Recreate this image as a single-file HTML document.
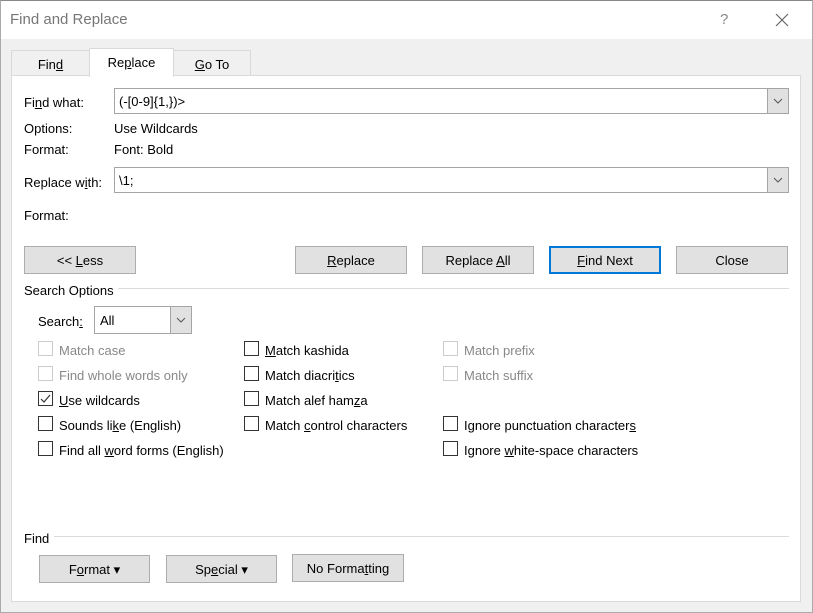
<!DOCTYPE html>
<html><head><style>
*{box-sizing:border-box;margin:0;padding:0}
body{width:813px;height:613px;background:#f0f0f0;font-family:"Liberation Sans",sans-serif;font-size:13px;color:#000;position:relative;overflow:hidden}
.a{position:absolute;white-space:nowrap}
.win{position:absolute;left:0;top:0;width:813px;height:613px;border:1px solid #aaa;border-top:1px solid #888}
.title{position:absolute;left:1px;top:1px;width:811px;height:38px;background:#fff}
.panel{position:absolute;left:11px;top:75px;width:790px;height:527px;background:#fff;border:1px solid #dadada}
.tab{position:absolute;top:50px;height:26px;background:#f0f0f0;border:1px solid #d9d9d9;border-bottom:none;text-align:center;line-height:28px}
.inp{position:absolute;left:114px;width:675px;height:26px;border:1px solid #a5a5a5;background:#fff;padding-left:4px;line-height:25px}
.dd{position:absolute;right:0;top:0;width:21px;height:24px;background:#e1e1e1;border-left:1px solid #a5a5a5}
.btn{position:absolute;height:28px;background:#e1e1e1;border:1px solid #adadad;text-align:center;line-height:27px}
.cb{position:absolute;width:15px;height:15px;border:1px solid #333;background:#fff}
.dis{border-color:#ccc}
.gt{color:#888}
u{text-decoration:underline}
.line{position:absolute;height:1px;background:#dcdcdc}
</style></head><body>
<div class="title"></div>
<div class="win"></div>
<div class="a" style="left:10px;top:11px;font-size:15px;color:#777">Find and Replace</div>
<div class="a" style="left:720px;top:11px;font-size:15px;color:#888">?</div>
<svg class="a" style="left:775px;top:13px" width="14" height="14"><path d="M1 1L13 13M13 1L1 13" stroke="#666" stroke-width="1.2"/></svg>
<div class="tab" style="left:11px;width:79px"><span>Fin<u>d</u></span></div>
<div class="tab" style="left:173px;width:78px"><u>G</u>o To</div>
<div class="panel"></div>
<div class="tab" style="left:89px;top:48px;width:85px;height:29px;background:#fff;z-index:2">Re<u>p</u>lace</div>

<div class="a" style="left:24px;top:95px">Fi<u>n</u>d what:</div>
<div class="inp" style="top:88px">(-[0-9]{1,})&gt;<div class="dd"><svg width="20" height="24"><path d="M6 10l4 4 4-4" stroke="#555" fill="none"/></svg></div></div>
<div class="a" style="left:24px;top:121px">Options:</div>
<div class="a" style="left:114px;top:121px">Use Wildcards</div>
<div class="a" style="left:24px;top:142px">Format:</div>
<div class="a" style="left:114px;top:142px">Font: Bold</div>
<div class="a" style="left:24px;top:175px">Replace w<u>i</u>th:</div>
<div class="inp" style="top:167px">\1;<div class="dd"><svg width="20" height="24"><path d="M6 10l4 4 4-4" stroke="#555" fill="none"/></svg></div></div>
<div class="a" style="left:24px;top:208px">Format:</div>

<div class="btn" style="left:24px;top:246px;width:112px">&lt;&lt; <u>L</u>ess</div>
<div class="btn" style="left:295px;top:246px;width:112px"><u>R</u>eplace</div>
<div class="btn" style="left:422px;top:246px;width:112px">Replace <u>A</u>ll</div>
<div class="btn" style="left:549px;top:246px;width:112px;border:2px solid #0078d7;line-height:25px"><u>F</u>ind Next</div>
<div class="btn" style="left:676px;top:246px;width:112px">Close</div>

<div class="a" style="left:24px;top:283px">Search Options</div>
<div class="line" style="left:118px;top:288px;width:671px"></div>
<div class="a" style="left:38px;top:314px">Search<u>:</u></div>
<div class="a" style="left:94px;top:306px;width:98px;height:28px;border:1px solid #a5a5a5;background:#fff;padding-left:5px;line-height:27px">All<div style="position:absolute;right:0;top:0;width:21px;height:26px;background:#e1e1e1;border-left:1px solid #a5a5a5"><svg width="20" height="26"><path d="M6 11l4 4 4-4" stroke="#555" fill="none"/></svg></div></div>

<div class="cb dis" style="left:38px;top:341px"></div><div class="a gt" style="left:59px;top:343px">Match case</div>
<div class="cb dis" style="left:38px;top:366px"></div><div class="a gt" style="left:59px;top:368px">Find whole words only</div>
<div class="cb" style="left:38px;top:391px"><svg width="13" height="13" style="position:absolute;left:0;top:0"><path d="M2 7l3 3 6-7" stroke="#333" fill="none" stroke-width="1.2"/></svg></div><div class="a" style="left:59px;top:393px"><u>U</u>se wildcards</div>
<div class="cb" style="left:38px;top:416px"></div><div class="a" style="left:59px;top:418px">Sounds li<u>k</u>e (English)</div>
<div class="cb" style="left:38px;top:441px"></div><div class="a" style="left:59px;top:443px">Find all <u>w</u>ord forms (English)</div>

<div class="cb" style="left:244px;top:341px"></div><div class="a" style="left:265px;top:343px"><u>M</u>atch kashida</div>
<div class="cb" style="left:244px;top:366px"></div><div class="a" style="left:265px;top:368px">Match diacri<u>t</u>ics</div>
<div class="cb" style="left:244px;top:391px"></div><div class="a" style="left:265px;top:393px">Match alef ham<u>z</u>a</div>
<div class="cb" style="left:244px;top:416px"></div><div class="a" style="left:265px;top:418px">Match <u>c</u>ontrol characters</div>

<div class="cb dis" style="left:443px;top:341px"></div><div class="a gt" style="left:464px;top:343px">Match prefix</div>
<div class="cb dis" style="left:443px;top:366px"></div><div class="a gt" style="left:464px;top:368px">Match suffix</div>
<div class="cb" style="left:443px;top:416px"></div><div class="a" style="left:464px;top:418px">Ignore punctuation character<u>s</u></div>
<div class="cb" style="left:443px;top:441px"></div><div class="a" style="left:464px;top:443px">Ignore <u>w</u>hite-space characters</div>

<div class="a" style="left:24px;top:531px">Find</div>
<div class="line" style="left:54px;top:536px;width:735px"></div>
<div class="btn" style="left:39px;top:555px;width:111px">F<u>o</u>rmat ▾</div>
<div class="btn" style="left:166px;top:555px;width:111px">Sp<u>e</u>cial ▾</div>
<div class="btn" style="left:292px;top:554px;width:112px">No Forma<u>t</u>ting</div>
</body></html>
